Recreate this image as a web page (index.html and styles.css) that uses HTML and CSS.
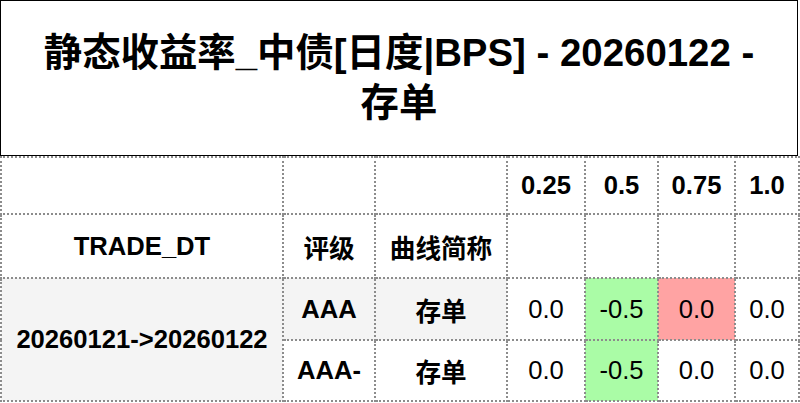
FILE: index.html
```html
<!DOCTYPE html>
<html lang="zh">
<head>
<meta charset="utf-8">
<title>静态收益率_中债</title>
<link rel="stylesheet" href="styles.css">
</head>
<body>
<div class="page">
  <div class="title">静态收益率_中债[日度|BPS] - 20260122 -<br>存单</div>
  <table class="grid">
    <colgroup>
      <col class="c-dt"><col class="c-rate"><col class="c-curve"><col class="c-a"><col class="c-b"><col class="c-c"><col class="c-d">
    </colgroup>
    <thead>
      <tr class="h1">
        <th></th><th></th><th></th><th>0.25</th><th>0.5</th><th>0.75</th><th>1.0</th>
      </tr>
      <tr class="h2">
        <th>TRADE_DT</th><th>评级</th><th>曲线简称</th><th></th><th></th><th></th><th></th>
      </tr>
    </thead>
    <tbody>
      <tr class="r1">
        <th rowspan="2" class="gray">20260121-&gt;20260122</th>
        <th class="gray">AAA</th>
        <th class="gray">存单</th>
        <td>0.0</td><td class="green">-0.5</td><td class="red">0.0</td><td>0.0</td>
      </tr>
      <tr class="r2">
        <th>AAA-</th>
        <th>存单</th>
        <td>0.0</td><td class="green">-0.5</td><td>0.0</td><td>0.0</td>
      </tr>
    </tbody>
  </table>
</div>
</body>
</html>
```
FILE: styles.css
```css
html, body {
  margin: 0;
  padding: 0;
  background: #ffffff;
}
body {
  font-family: "Liberation Sans", "Noto Sans CJK SC", Arial, sans-serif;
  color: #000;
}
.page {
  width: 798px;
}
.title {
  box-sizing: border-box;
  height: 156px;
  border: 1px solid #000;
  display: flex;
  align-items: center;
  justify-content: center;
  text-align: center;
  font-size: 38.4px;
  line-height: 50px;
  font-weight: bold;
}
.grid {
  border-collapse: collapse;
  table-layout: fixed;
  width: 798px;
  font-size: 25.6px;
}
.grid th, .grid td {
  border: 2px dotted #8c8c8c;
  padding: 0;
  text-align: center;
  vertical-align: middle;
}
.grid th { font-weight: bold; }
.grid td { font-weight: normal; }
.c-dt { width: 282px; }
.c-rate { width: 92px; }
.c-curve { width: 132px; }
.c-a { width: 78px; }
.c-b { width: 73px; }
.c-c { width: 77px; }
.c-d { width: 64px; }
.h1 { height: 57px; }
.h2 { height: 64px; }
.r1 { height: 62px; }
.r2 { height: 61px; }
.gray { background: #f4f4f4; }
.green { background: #aafca6; }
.red { background: #ffa3a3; }
```
